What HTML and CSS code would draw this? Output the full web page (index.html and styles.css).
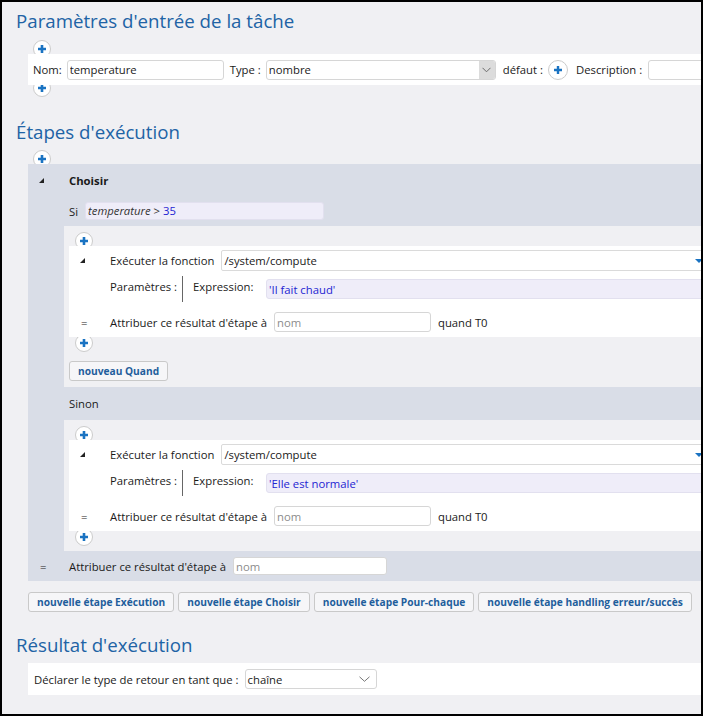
FILE: index.html
```html
<!DOCTYPE html>
<html lang="fr">
<head>
    <meta charset="UTF-8">
    <title>Paramètres de la tâche</title>
    <link rel="stylesheet" href="styles.css">
</head>
<body>
<div class="frame">
    <h2 class="title title-params">Paramètres d'entrée de la tâche</h2>
    <div class="section">
        <span class="add add-above"><svg width="18" height="18" viewBox="0 0 18 18"><circle cx="9" cy="9" r="8.5" fill="#fff" stroke="#cbcbcb"/><path d="M9 5v8M5 9h8" stroke="#1a73c2" stroke-width="2.6"/></svg></span>
        <div class="band param-band">
            <span class="lbl">Nom:</span>
            <input class="field name-field" type="text" value="temperature">
            <span class="lbl type-lbl">Type :</span>
            <div class="select type-select">
                <span class="select-text">nombre</span>
                <span class="select-btn"><svg width="9" height="6" viewBox="0 0 9 6"><path d="M0.5 0.8l4 4 4-4" fill="none" stroke="#6a6a6a"/></svg></span>
            </div>
            <span class="lbl default-lbl">défaut :</span>
            <span class="add add-inline"><svg width="20" height="20" viewBox="0 0 20 20"><circle cx="10" cy="10" r="9.5" fill="#fff" stroke="#cbcbcb"/><path d="M10 6v8M6 10h8" stroke="#1a73c2" stroke-width="2.4"/></svg></span>
            <span class="lbl desc-lbl">Description :</span>
            <input class="field desc-field" type="text">
        </div>
        <span class="add add-below-wide"><svg width="18" height="18" viewBox="0 0 18 18"><circle cx="9" cy="9" r="8.5" fill="#fff" stroke="#cbcbcb"/><path d="M9 5v8M5 9h8" stroke="#1a73c2" stroke-width="2.6"/></svg></span>
    </div>

    <h2 class="title title-steps">Étapes d'exécution</h2>
    <div class="section">
        <span class="add add-above add-steps"><svg width="18" height="18" viewBox="0 0 18 18"><circle cx="9" cy="9" r="8.5" fill="#fff" stroke="#cbcbcb"/><path d="M9 5v8M5 9h8" stroke="#1a73c2" stroke-width="2.6"/></svg></span>
        <div class="choose">
            <div class="choose-head">
                <span class="gutter"><span class="twisty"></span></span>
                <span class="choose-title">Choisir</span>
            </div>
            <div class="cond-row">
                <span>Si</span>
                <div class="expr cond-expr"><i class="var">temperature</i> <span class="op">&gt;</span> <span class="num">35</span></div>
            </div>

            <div class="branch">
                <span class="add add-step-top"><svg width="18" height="18" viewBox="0 0 18 18"><circle cx="9" cy="9" r="8.5" fill="#fff" stroke="#cbcbcb"/><path d="M9 5v8M5 9h8" stroke="#1a73c2" stroke-width="2.6"/></svg></span>
                <div class="band step-band">
                    <div class="step-row fn-row">
                        <span class="gutter"><span class="twisty"></span></span>
                        <span>Exécuter la fonction</span>
                        <div class="fn-select">/system/compute<span class="fn-arrow"></span></div>
                    </div>
                    <div class="step-row params-row">
                        <span class="gutter"></span>
                        <span class="params-lbl">Paramètres :</span>
                        <div class="param-list">
                            <span class="param-name">Expression:</span>
                            <div class="expr param-expr"><span class="str">'Il fait chaud'</span></div>
                        </div>
                    </div>
                    <div class="step-row assign-row">
                        <span class="gutter eq">=</span>
                        <span>Attribuer ce résultat d'étape à</span>
                        <input class="field var-field" type="text" placeholder="nom">
                        <span class="when">quand T0</span>
                    </div>
                </div>
                <span class="add add-step-bottom"><svg width="18" height="18" viewBox="0 0 18 18"><circle cx="9" cy="9" r="8.5" fill="#fff" stroke="#cbcbcb"/><path d="M9 5v8M5 9h8" stroke="#1a73c2" stroke-width="2.6"/></svg></span>
                <button class="btn when-btn">nouveau Quand</button>
            </div>

            <div class="else-head">Sinon</div>

            <div class="branch branch-else">
                <span class="add add-step-top"><svg width="18" height="18" viewBox="0 0 18 18"><circle cx="9" cy="9" r="8.5" fill="#fff" stroke="#cbcbcb"/><path d="M9 5v8M5 9h8" stroke="#1a73c2" stroke-width="2.6"/></svg></span>
                <div class="band step-band">
                    <div class="step-row fn-row">
                        <span class="gutter"><span class="twisty"></span></span>
                        <span>Exécuter la fonction</span>
                        <div class="fn-select">/system/compute<span class="fn-arrow"></span></div>
                    </div>
                    <div class="step-row params-row">
                        <span class="gutter"></span>
                        <span class="params-lbl">Paramètres :</span>
                        <div class="param-list">
                            <span class="param-name">Expression:</span>
                            <div class="expr param-expr"><span class="str">'Elle est normale'</span></div>
                        </div>
                    </div>
                    <div class="step-row assign-row">
                        <span class="gutter eq">=</span>
                        <span>Attribuer ce résultat d'étape à</span>
                        <input class="field var-field" type="text" placeholder="nom">
                        <span class="when">quand T0</span>
                    </div>
                </div>
                <span class="add add-step-bottom"><svg width="18" height="18" viewBox="0 0 18 18"><circle cx="9" cy="9" r="8.5" fill="#fff" stroke="#cbcbcb"/><path d="M9 5v8M5 9h8" stroke="#1a73c2" stroke-width="2.6"/></svg></span>
            </div>

            <div class="step-row choose-assign">
                <span class="gutter eq">=</span>
                <span>Attribuer ce résultat d'étape à</span>
                <input class="field choose-field" type="text" placeholder="nom">
            </div>
        </div>

        <div class="actions">
            <button class="btn">nouvelle étape Exécution</button>
            <button class="btn">nouvelle étape Choisir</button>
            <button class="btn">nouvelle étape Pour-chaque</button>
            <button class="btn">nouvelle étape handling erreur/succès</button>
        </div>
    </div>

    <h2 class="title title-result">Résultat d'exécution</h2>
    <div class="section">
        <div class="band result-band">
            <span class="lbl">Déclarer le type de retour en tant que :</span>
            <div class="select result-select">
                <span class="select-text">chaîne</span>
                <svg width="11" height="6" viewBox="0 0 11 6"><path d="M0.5 0.8l5 4.5 5-4.5" fill="none" stroke="#777"/></svg>
            </div>
        </div>
    </div>
</div>
</body>
</html>
```

FILE: styles.css
```css
body {
    margin: 0;
    font-family: "Open Sans", "Segoe UI", sans-serif;
    font-size: 11.3px;
    color: #1a1a1a;
}
.frame {
    box-sizing: border-box;
    width: 703px;
    height: 716px;
    border: 2px solid #000;
    background-color: #f0f0f3;
    padding-left: 14px;
    overflow: hidden;
}
.title {
    margin: 0;
    font-size: 18.7px;
    line-height: 28px;
    font-weight: normal;
    color: #2163a5;
    white-space: nowrap;
}
.title-params { margin-top: 5px; }
.title-steps { margin-top: 21px; }
.title-result { margin-top: 19px; }
.section {
    margin-left: 12px;
}

/* boutons + ronds */
.add {
    display: block;
    width: 18px;
    height: 18px;
    line-height: 0;
}
.add-above { margin: 5px 0 -4px 5px; }
.add-steps { margin-top: 4px; }
.add-below-wide { margin: -6px 0 0 5px; }
.add-step-top { margin: 0 0 -4px 11px; }
.add-step-bottom { margin: -3px 0 0 11px; }
.add-inline {
    width: 20px;
    height: 20px;
    flex: none;
}

.band {
    position: relative;
    z-index: 1;
    background-color: #fff;
}
.lbl { flex: none; white-space: nowrap; }
.field {
    box-sizing: border-box;
    height: 20px;
    font: inherit;
    color: #1a1a1a;
    border: 1px solid #d6d6d6;
    border-radius: 3px;
    padding: 0 2px;
    background-color: #fff;
    outline: none;
    flex: none;
}
.field::placeholder { color: #8c8c8c; }

.param-band {
    display: flex;
    align-items: center;
    height: 31px;
    padding-left: 5px;
    white-space: nowrap;
}
.name-field { width: 157px; margin-left: 5px; }
.type-lbl { margin-left: 6px; }
.select {
    box-sizing: border-box;
    display: flex;
    align-items: center;
    height: 20px;
    border: 1px solid #d6d6d6;
    border-radius: 3px;
    background-color: #fff;
    flex: none;
}
.select-text { flex: 1; padding-left: 2px; }
.type-select { width: 230px; margin-left: 5px; overflow: hidden; }
.select-btn {
    width: 16px;
    height: 100%;
    background-color: #dcdcdc;
    display: flex;
    align-items: center;
    justify-content: center;
}
.default-lbl { margin-left: 7px; }
.add-inline { margin-left: 5px; }
.desc-lbl { margin-left: 8px; }
.desc-field { width: 110px; margin-left: 6px; }

/* Choisir */
.choose {
    position: relative;
    z-index: 1;
    background-color: #d9dde7;
}
.choose-head {
    display: flex;
    align-items: center;
    height: 32px;
}
.gutter {
    box-sizing: border-box;
    width: 41px;
    padding-left: 11px;
    flex: none;
    display: flex;
    align-items: center;
}
.twisty {
    width: 0;
    height: 0;
    border-left: 5px solid transparent;
    border-bottom: 5px solid #222;
}
.choose-title { font-weight: bold; }
.cond-row {
    display: flex;
    align-items: center;
    height: 18px;
    margin-top: 6px;
    padding-left: 41px;
}
.expr {
    box-sizing: border-box;
    background-color: #efedf9;
    border: 1px solid #e2e0ef;
    border-radius: 3px;
    white-space: pre;
}
.cond-expr {
    width: 239px;
    height: 18px;
    line-height: 16px;
    margin-left: 7px;
    padding-left: 2px;
}
.var { color: #333; }
.op { color: #333; }
.num, .str { color: #2424d2; }

.branch {
    background-color: #f0f0f3;
    margin-top: 6px;
    margin-left: 36px;
    padding: 6px 0;
}
.branch-else {
    margin-top: 0;
    padding-bottom: 5px;
}
.step-band {
    margin-left: 5px;
    margin-right: -8px;
    padding: 4px 0 5px;
}
.step-row {
    display: flex;
    align-items: center;
    white-space: nowrap;
}
.fn-row { height: 21px; }
.fn-select {
    position: relative;
    box-sizing: border-box;
    flex: 1;
    height: 21px;
    margin-left: 7px;
    padding-left: 2px;
    border: 1px solid #dadada;
    border-radius: 2px;
    display: flex;
    align-items: center;
}
.fn-arrow {
    position: absolute;
    right: 5px;
    top: 8px;
    width: 0;
    height: 0;
    border-left: 4px solid transparent;
    border-right: 4px solid transparent;
    border-top: 4px solid #1a73c2;
}
.params-row {
    height: 26px;
    margin-top: 5px;
    align-items: flex-start;
}
.params-lbl { margin-top: 3px; line-height: 16px; }
.param-list {
    flex: 1;
    display: flex;
    align-items: flex-start;
    height: 26px;
    margin-left: 5px;
    padding-left: 10px;
    border-left: 1px solid #666;
}
.param-name {
    width: 73px;
    flex: none;
    margin-top: 3px;
    line-height: 16px;
}
.param-expr {
    flex: 1;
    height: 20px;
    line-height: 18px;
    margin-top: 3px;
    padding: 1px 2px 0;
}
.assign-row {
    height: 20px;
    margin-top: 10px;
}
.eq { padding-left: 12px; }
.var-field { width: 157px; margin-left: 7px; }
.when { margin-left: 7px; }

.else-head {
    height: 33px;
    line-height: 33px;
    padding-left: 41px;
}
.choose-assign { height: 30px; }
.choose-field { width: 154px; height: 18px; margin-left: 7px; }

/* boutons */
.btn {
    box-sizing: border-box;
    height: 20px;
    padding: 0 8px;
    font-family: inherit;
    font-size: 10.2px;
    font-weight: bold;
    color: #1f5e9c;
    background-color: #f6f6f8;
    border: 1px solid #c9c9c9;
    border-radius: 3px;
    white-space: nowrap;
    cursor: pointer;
}
.when-btn {
    display: block;
    margin: 9px 0 0 5px;
}
.actions {
    display: flex;
    gap: 4px;
    margin-top: 11px;
}

.result-band {
    display: flex;
    align-items: center;
    height: 32px;
    margin-top: 4px;
    padding-left: 6px;
}
.result-select {
    width: 132px;
    margin-left: 6px;
    padding-right: 6px;
}
```
